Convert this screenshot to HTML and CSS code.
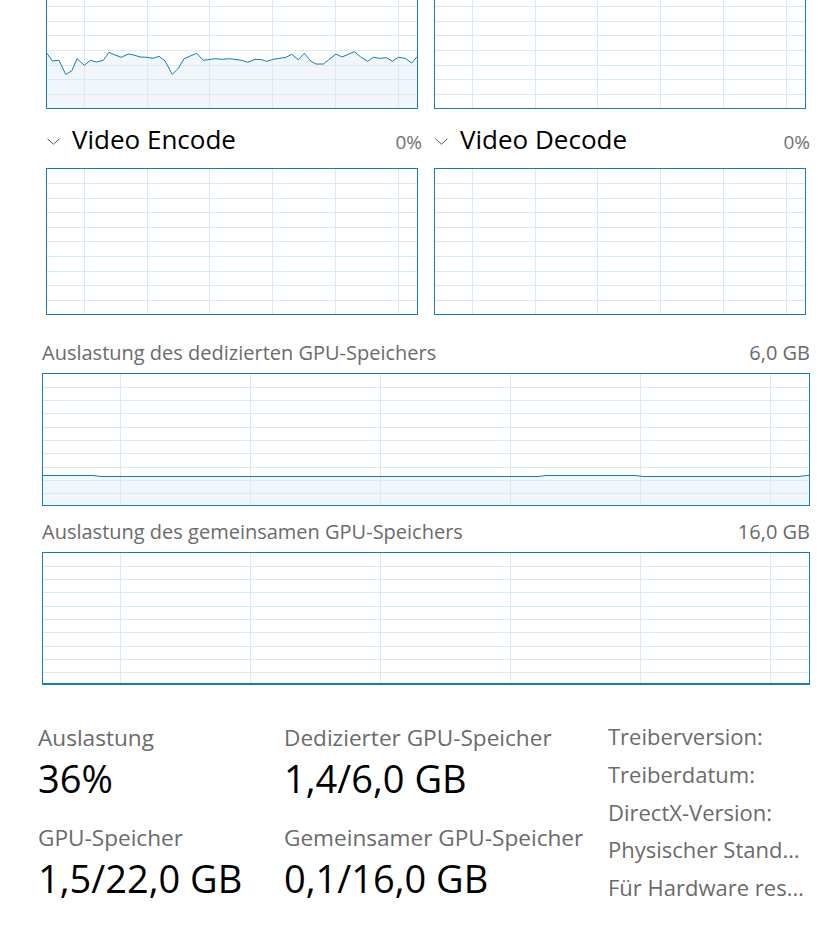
FILE: index.html
```html
<!DOCTYPE html>
<html lang="de">
<head>
<meta charset="utf-8">
<title>GPU – Leistung</title>
<link rel="stylesheet" href="styles.css">
</head>
<body>
<main class="page">
  <div class="engines">
    <section class="engine">
      <div class="chart engine-chart">
        <svg width="370" height="145" viewBox="0 0 370 145">
          <path class="fill" d="M0,90.3 L5.3,98 12,97.3 18.7,111.3 24.7,108 30,95.7 37.3,102.3 43.3,97.3 49.3,99 56.3,97.3 62,89.3 68,92 74.3,94.3 81.3,91 87,92 93,94 99.7,94.3 106.3,95.3 112,93.3 118,98 125.3,111.3 131.3,105.3 137,95.7 149.7,90.3 156.3,97.3 168,95.7 174.7,96.3 182.3,95.7 194.7,97.3 200.7,99.3 208,96.3 214.7,96.7 219.7,98.3 226.3,96.3 239,94.3 244.7,91.3 251.3,96.7 257.3,90.3 263.7,98 269,101 276.3,101 289,91 295,94 307.3,88.7 313.7,94 320.7,98.3 326.3,94.3 333,95.3 339.7,94.7 345.3,98.3 351.3,94.3 358,95.3 364.7,100 370,93.7 L370,145 L0,145 Z"/>
          <path class="grid" d="M37.5 0V145M100.5 0V145M162.5 0V145M225.5 0V145M288.5 0V145M351.5 0V145M0 14.5H370M0 29.5H370M0 43.5H370M0 58.5H370M0 72.5H370M0 87.5H370M0 102.5H370M0 116.5H370M0 131.5H370"/>
          <polyline class="line" points="0,90.3 5.3,98 12,97.3 18.7,111.3 24.7,108 30,95.7 37.3,102.3 43.3,97.3 49.3,99 56.3,97.3 62,89.3 68,92 74.3,94.3 81.3,91 87,92 93,94 99.7,94.3 106.3,95.3 112,93.3 118,98 125.3,111.3 131.3,105.3 137,95.7 149.7,90.3 156.3,97.3 168,95.7 174.7,96.3 182.3,95.7 194.7,97.3 200.7,99.3 208,96.3 214.7,96.7 219.7,98.3 226.3,96.3 239,94.3 244.7,91.3 251.3,96.7 257.3,90.3 263.7,98 269,101 276.3,101 289,91 295,94 307.3,88.7 313.7,94 320.7,98.3 326.3,94.3 333,95.3 339.7,94.7 345.3,98.3 351.3,94.3 358,95.3 364.7,100 370,93.7"/>
        </svg>
      </div>
    </section>
    <section class="engine">
      <div class="chart engine-chart">
        <svg width="370" height="145" viewBox="0 0 370 145">
          <path class="grid" d="M37.5 0V145M100.5 0V145M162.5 0V145M225.5 0V145M288.5 0V145M351.5 0V145M0 14.5H370M0 29.5H370M0 43.5H370M0 58.5H370M0 72.5H370M0 87.5H370M0 102.5H370M0 116.5H370M0 131.5H370"/>
        </svg>
      </div>
    </section>
    <section class="engine">
      <header class="engine-head">
        <svg class="chevron" width="13" height="7" viewBox="0 0 13 7"><polyline points="0.5,0.8 6.5,6.2 12.5,0.8"/></svg>
        <h2 class="engine-title">Video Encode</h2>
        <span class="engine-pct">0%</span>
      </header>
      <div class="chart engine-chart">
        <svg width="370" height="145" viewBox="0 0 370 145">
          <path class="grid" d="M37.5 0V145M100.5 0V145M162.5 0V145M225.5 0V145M288.5 0V145M351.5 0V145M0 14.5H370M0 29.5H370M0 43.5H370M0 58.5H370M0 72.5H370M0 87.5H370M0 102.5H370M0 116.5H370M0 131.5H370"/>
        </svg>
      </div>
    </section>
    <section class="engine">
      <header class="engine-head">
        <svg class="chevron" width="13" height="7" viewBox="0 0 13 7"><polyline points="0.5,0.8 6.5,6.2 12.5,0.8"/></svg>
        <h2 class="engine-title">Video Decode</h2>
        <span class="engine-pct">0%</span>
      </header>
      <div class="chart engine-chart">
        <svg width="370" height="145" viewBox="0 0 370 145">
          <path class="grid" d="M37.5 0V145M100.5 0V145M162.5 0V145M225.5 0V145M288.5 0V145M351.5 0V145M0 14.5H370M0 29.5H370M0 43.5H370M0 58.5H370M0 72.5H370M0 87.5H370M0 102.5H370M0 116.5H370M0 131.5H370"/>
        </svg>
      </div>
    </section>
  </div>

  <div class="memory">
    <section class="mem">
      <header class="mem-head">
        <span>Auslastung des dedizierten GPU-Speichers</span>
        <span>6,0 GB</span>
      </header>
      <div class="chart mem-chart">
        <svg width="766" height="131" viewBox="0 0 766 131">
          <path class="fill" d="M0,101 L50,101 58,102 495,102 503,101 592,101 600,102 756,102 764,101 766,101 L766,131 L0,131 Z"/>
          <path class="grid" d="M77.5 0V131M207.5 0V131M337.5 0V131M467.5 0V131M597.5 0V131M727.5 0V131M0 13.5H766M0 26.5H766M0 39.5H766M0 53.5H766M0 66.5H766M0 79.5H766M0 93.5H766M0 106.5H766M0 119.5H766"/>
          <polyline class="line" points="0,101.5 50,101.5 58,102.5 495,102.5 503,101.5 592,101.5 600,102.5 756,102.5 764,101.5 766,101.5"/>
        </svg>
      </div>
    </section>
    <section class="mem">
      <header class="mem-head">
        <span>Auslastung des gemeinsamen GPU-Speichers</span>
        <span>16,0 GB</span>
      </header>
      <div class="chart mem-chart">
        <svg width="766" height="131" viewBox="0 0 766 131">
          <path class="grid" d="M77.5 0V131M207.5 0V131M337.5 0V131M467.5 0V131M597.5 0V131M727.5 0V131M0 13.5H766M0 26.5H766M0 39.5H766M0 53.5H766M0 66.5H766M0 79.5H766M0 93.5H766M0 106.5H766M0 119.5H766"/>
          <polyline class="line" points="0,130.5 766,130.5"/>
        </svg>
      </div>
    </section>
  </div>

  <div class="stats">
    <div class="stat-col">
      <div class="stat">
        <div class="stat-label">Auslastung</div>
        <div class="stat-value">36%</div>
      </div>
      <div class="stat">
        <div class="stat-label">GPU-Speicher</div>
        <div class="stat-value">1,5/22,0 GB</div>
      </div>
    </div>
    <div class="stat-col">
      <div class="stat">
        <div class="stat-label">Dedizierter GPU-Speicher</div>
        <div class="stat-value">1,4/6,0 GB</div>
      </div>
      <div class="stat">
        <div class="stat-label">Gemeinsamer GPU-Speicher</div>
        <div class="stat-value">0,1/16,0 GB</div>
      </div>
    </div>
    <ul class="props">
      <li>Treiberversion:</li>
      <li>Treiberdatum:</li>
      <li>DirectX-Version:</li>
      <li>Physischer Standort:</li>
      <li>Für Hardware reservierter Speicher:</li>
    </ul>
  </div>
</main>
</body>
</html>
```

FILE: styles.css
```css
html, body {
  margin: 0;
  padding: 0;
  background: #ffffff;
}

body {
  font-family: "Open Sans", "Noto Sans", sans-serif;
  color: #000000;
  overflow: hidden;
}

.page {
  margin-top: -38px;
  padding: 0 30px 0 38px;
}

/* engine charts */
.engines {
  display: grid;
  grid-template-columns: 1fr 1fr;
  column-gap: 12px;
  padding-left: 8px;
}

.engine-head {
  display: flex;
  align-items: baseline;
  height: 59px;
  box-sizing: border-box;
  padding-top: 2px;
}

.chevron {
  align-self: center;
  margin: 4px 12px 0 1px;
  flex: none;
}

.chevron polyline {
  fill: none;
  stroke: #5a5a5a;
  stroke-width: 1;
}

.engine-title {
  margin: 0;
  font-size: 26px;
  font-weight: 400;
  line-height: 57px;
  white-space: nowrap;
}

.engine-pct {
  margin-left: auto;
  font-size: 19px;
  color: #707070;
}

.chart {
  border: 1px solid #117dbb;
  box-sizing: border-box;
  background: #ffffff;
}

.chart svg {
  display: block;
}

.engine-chart {
  width: calc(100% - 4px);
  height: 147px;
}

.grid {
  fill: none;
  stroke: #d9eaf4;
  stroke-width: 1;
  shape-rendering: crispEdges;
}

.fill {
  fill: #f1f6fa;
  stroke: none;
}

.line {
  fill: none;
  stroke: #117dbb;
  stroke-width: 1;
}

/* memory charts */
.memory {
  margin-top: 12px;
  padding-left: 4px;
}

.mem-head {
  display: flex;
  justify-content: space-between;
  height: 46px;
  box-sizing: border-box;
  padding-top: 6px;
  font-size: 20px;
  line-height: 40px;
  color: #6b6b6b;
  white-space: nowrap;
}

.mem-chart {
  height: 133px;
}

/* statistics */
.stats {
  display: grid;
  grid-template-columns: 246px 324px 1fr;
  margin-top: 38px;
}

.stat-col {
  display: flex;
  flex-direction: column;
  gap: 21px;
}

.stat-label {
  font-size: 22.6px;
  line-height: 30px;
  color: #6b6b6b;
  white-space: nowrap;
}

.stat-value {
  margin-top: 1px;
  font-size: 38px;
  line-height: 48px;
  color: #000000;
  white-space: nowrap;
}

.props {
  list-style: none;
  margin: -5px 0 0;
  padding: 0 5px 0 0;
  min-width: 0;
}

.props li {
  font-size: 22px;
  line-height: 37.75px;
  color: #6b6b6b;
  white-space: nowrap;
  overflow: hidden;
  text-overflow: ellipsis;
}
```
